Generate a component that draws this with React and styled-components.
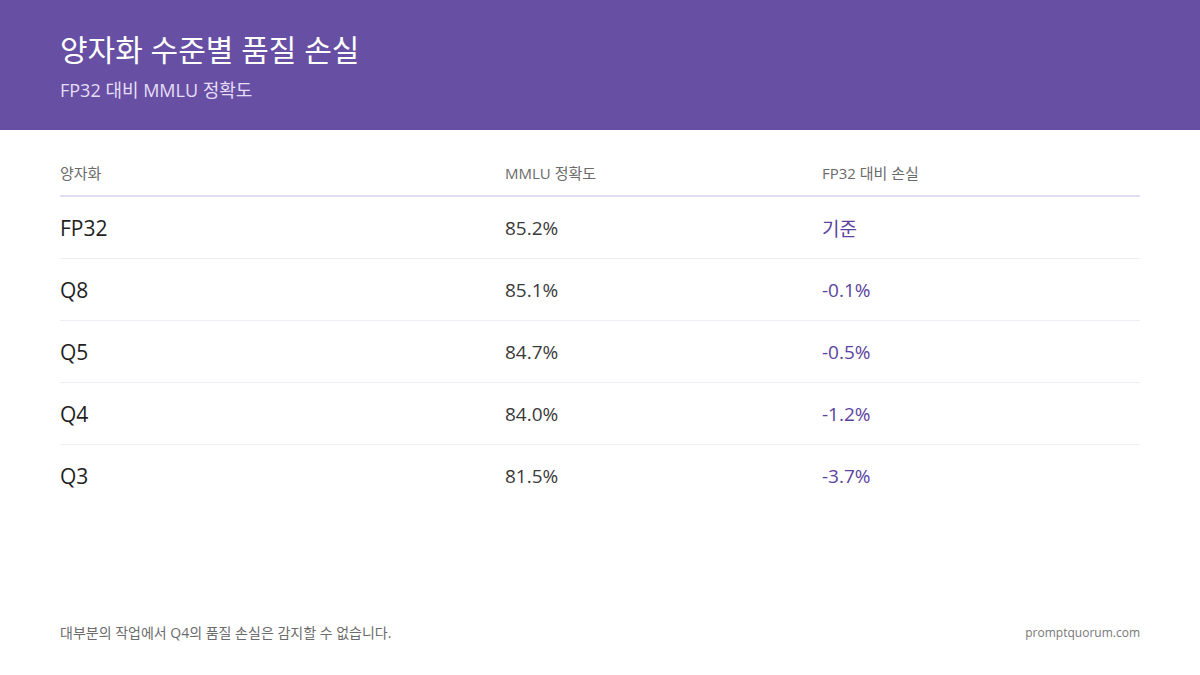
import React from "react";
import styled, { createGlobalStyle } from "styled-components";

const GlobalStyle = createGlobalStyle`
  html, body {
    margin: 0;
    padding: 0;
    background: #ffffff;
  }
  body {
    font-family: "Open Sans", "Noto Sans CJK KR", sans-serif;
  }
`;

const Page = styled.div`
  width: 1200px;
  height: 675px;
  display: flex;
  flex-direction: column;
  background: #ffffff;
  overflow: hidden;
`;

const Header = styled.header`
  height: 130px;
  box-sizing: border-box;
  background: #6750a4;
  padding: 30px 60px 0;
  color: #ffffff;
`;

const Title = styled.h1`
  margin: 0;
  font-size: 30px;
  line-height: 40px;
  font-weight: 400;
`;

const Subtitle = styled.div`
  margin-top: 8px;
  font-size: 18px;
  line-height: 24px;
  color: #e6def8;
`;

const Main = styled.main`
  flex: 1;
  padding: 33px 60px 0;
`;

const Row = styled.div`
  display: grid;
  grid-template-columns: 445px 317px 1fr;
  align-items: center;
  box-sizing: border-box;
  height: ${(p) => (p.$head ? "auto" : "62px")};
  padding-bottom: ${(p) => (p.$head ? "12px" : "0")};
  border-bottom: ${(p) =>
    p.$head ? "2px solid #e2dcf3" : p.$last ? "none" : "1px solid #efedf4"};
`;

const HeadCell = styled.div`
  font-size: 15px;
  line-height: 20px;
  color: #6b6b6b;
`;

const NameCell = styled.div`
  font-size: 21px;
  color: #1f1f1f;
`;

const ValueCell = styled.div`
  font-size: 19px;
  color: #3a3a3a;
`;

const LossCell = styled.div`
  font-size: 19px;
  color: #5c43a0;
`;

const Footer = styled.footer`
  display: flex;
  justify-content: space-between;
  align-items: center;
  padding: 0 60px 33px;
  line-height: 18px;
  color: #6b6b6b;
`;

const Note = styled.span`
  font-size: 14px;
`;

const Site = styled.span`
  font-size: 12px;
  color: #777777;
`;

const rows = [
  { name: "FP32", acc: "85.2%", loss: "기준" },
  { name: "Q8", acc: "85.1%", loss: "-0.1%" },
  { name: "Q5", acc: "84.7%", loss: "-0.5%" },
  { name: "Q4", acc: "84.0%", loss: "-1.2%" },
  { name: "Q3", acc: "81.5%", loss: "-3.7%" },
];

export default function App() {
  return (
    <Page>
      <GlobalStyle />
      <Header>
        <Title>양자화 수준별 품질 손실</Title>
        <Subtitle>FP32 대비 MMLU 정확도</Subtitle>
      </Header>
      <Main>
        <Row $head>
          <HeadCell>양자화</HeadCell>
          <HeadCell>MMLU 정확도</HeadCell>
          <HeadCell>FP32 대비 손실</HeadCell>
        </Row>
        {rows.map((r, i) => (
          <Row key={r.name} $last={i === rows.length - 1}>
            <NameCell>{r.name}</NameCell>
            <ValueCell>{r.acc}</ValueCell>
            <LossCell>{r.loss}</LossCell>
          </Row>
        ))}
      </Main>
      <Footer>
        <Note>대부분의 작업에서 Q4의 품질 손실은 감지할 수 없습니다.</Note>
        <Site>promptquorum.com</Site>
      </Footer>
    </Page>
  );
}
